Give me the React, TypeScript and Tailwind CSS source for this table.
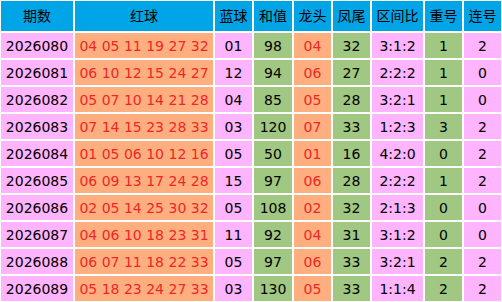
import React from "react";

type Row = [string, string, string, string, string, string, string, string, string];

const rows: Row[] = [
  ["2026080", "04 05 11 19 27 32", "01", "98", "04", "32", "3:1:2", "1", "2"],
  ["2026081", "06 10 12 15 24 27", "12", "94", "06", "27", "2:2:2", "1", "0"],
  ["2026082", "05 07 10 14 21 28", "04", "85", "05", "28", "3:2:1", "1", "0"],
  ["2026083", "07 14 15 23 28 33", "03", "120", "07", "33", "1:2:3", "3", "2"],
  ["2026084", "01 05 06 10 12 16", "05", "50", "01", "16", "4:2:0", "0", "2"],
  ["2026085", "06 09 13 17 24 28", "15", "97", "06", "28", "2:2:2", "1", "2"],
  ["2026086", "02 05 14 25 30 32", "05", "108", "02", "32", "2:1:3", "0", "0"],
  ["2026087", "04 06 10 18 23 31", "11", "92", "04", "31", "3:1:2", "0", "0"],
  ["2026088", "06 07 11 18 22 33", "05", "97", "06", "33", "3:2:1", "2", "2"],
  ["2026089", "05 18 23 24 27 33", "03", "130", "05", "33", "1:1:4", "2", "2"],
];

const headers = ["期数", "红球", "蓝球", "和值", "龙头", "凤尾", "区间比", "重号", "连号"];

// background + text colour for each column of the body
const cellStyle = [
  "bg-[#ffb4ff] text-black",
  "bg-[#ffaf7f] text-[#f02626]",
  "bg-[#ffb4ff] text-black",
  "bg-[#a0c882] text-black",
  "bg-[#ffaf7f] text-[#f02626]",
  "bg-[#a0c882] text-black",
  "bg-[#ffb4ff] text-black",
  "bg-[#a0c882] text-black",
  "bg-[#ffb4ff] text-black",
];

export default function App() {
  return (
    <div
      className="w-[502px] h-[302px] bg-white p-px grid grid-cols-[72px_138px_37px_38px_37px_37px_51px_37px_37px] grid-rows-[30px_repeat(10,25px)] gap-[2px] text-[14px] leading-none"
      style={{ fontFamily: '"DejaVu Sans", "Noto Sans CJK SC", sans-serif' }}
    >
      {headers.map((h) => (
        <div key={h} className="bg-[#00a5e8] text-black flex items-center justify-center">
          {h}
        </div>
      ))}
      {rows.map((row) =>
        row.map((val, i) => (
          <div key={row[0] + i} className={`flex items-center justify-center ${cellStyle[i]}`}>
            {val}
          </div>
        ))
      )}
    </div>
  );
}
